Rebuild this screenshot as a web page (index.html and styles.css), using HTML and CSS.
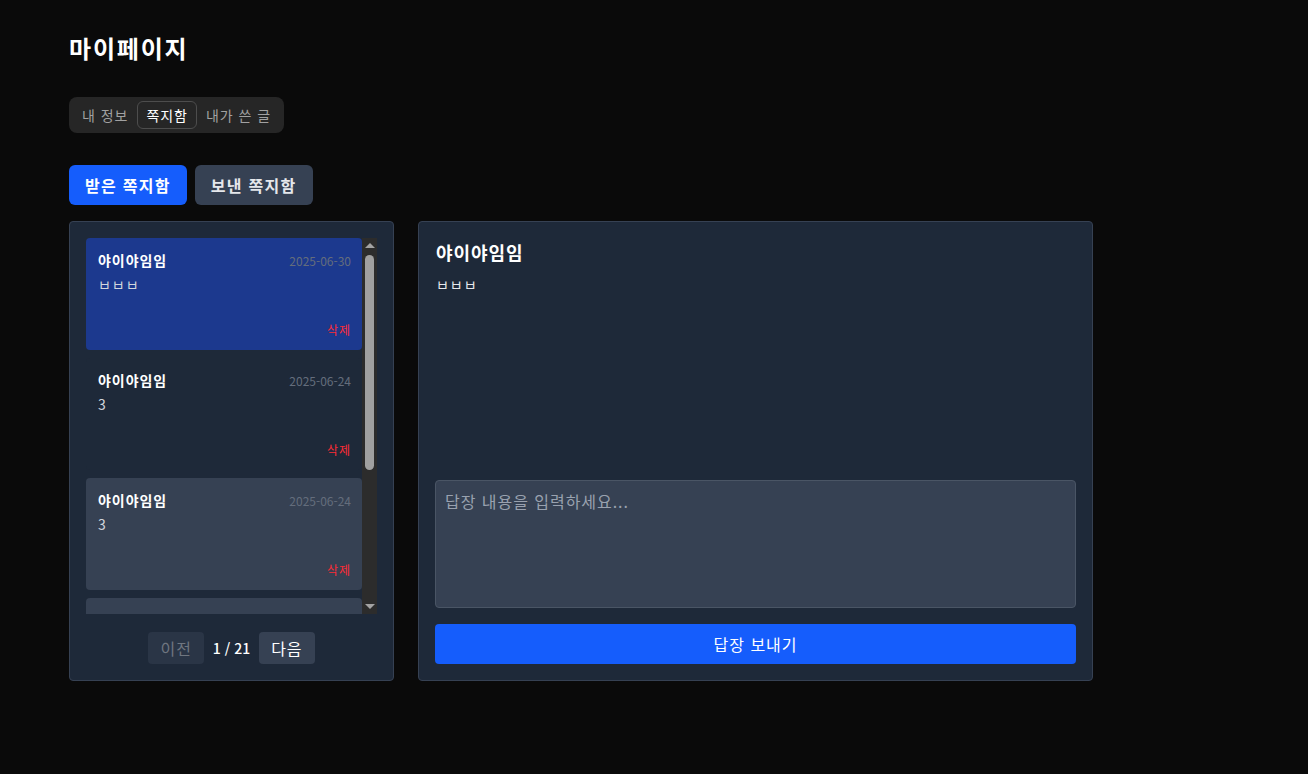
FILE: index.html
```html
<!DOCTYPE html>
<html lang="ko">

<head>
  <meta charset="UTF-8">
  <meta name="viewport" content="width=device-width, initial-scale=1.0">
  <title>마이페이지</title>
  <link rel="stylesheet" href="styles.css">
</head>

<body>
  <div class="page">
    <h1>마이페이지</h1>

    <div class="tabs">
      <button class="tab">내 정보</button>
      <button class="tab active">쪽지함</button>
      <button class="tab">내가 쓴 글</button>
    </div>

    <div class="box-switch">
      <button class="box-btn active">받은 쪽지함</button>
      <button class="box-btn">보낸 쪽지함</button>
    </div>

    <div class="inbox">
      <div class="list-panel">
        <div class="list-scroll">
          <div class="message-list">
            <div class="message-item selected">
              <div class="item-head">
                <span class="sender">야이야임임</span>
                <span class="date">2025-06-30</span>
              </div>
              <p class="preview">ㅂㅂㅂ</p>
              <button class="delete-btn">삭제</button>
            </div>
            <div class="message-item plain">
              <div class="item-head">
                <span class="sender">야이야임임</span>
                <span class="date">2025-06-24</span>
              </div>
              <p class="preview">3</p>
              <button class="delete-btn">삭제</button>
            </div>
            <div class="message-item">
              <div class="item-head">
                <span class="sender">야이야임임</span>
                <span class="date">2025-06-24</span>
              </div>
              <p class="preview">3</p>
              <button class="delete-btn">삭제</button>
            </div>
            <div class="message-item">
              <div class="item-head">
                <span class="sender">야이야임임</span>
                <span class="date">2025-06-24</span>
              </div>
              <p class="preview">2</p>
              <button class="delete-btn">삭제</button>
            </div>
          </div>

          <!-- scrollbar -->
          <div class="scrollbar">
            <span class="arrow up"></span>
            <div class="track"><span class="thumb"></span></div>
            <span class="arrow down"></span>
          </div>
        </div>

        <div class="pagination">
          <button class="page-btn" disabled>이전</button>
          <span class="page-info">1 / 21</span>
          <button class="page-btn">다음</button>
        </div>
      </div>

      <div class="detail-panel">
        <div class="detail-body">
          <h2>야이야임임</h2>
          <p class="detail-text">ㅂㅂㅂ</p>
        </div>
        <textarea class="reply-input" placeholder="답장 내용을 입력하세요..."></textarea>
        <button class="reply-btn">답장 보내기</button>
      </div>
    </div>
  </div>
</body>

</html>
```

FILE: styles.css
```css
* {
  box-sizing: border-box;
  margin: 0;
  padding: 0;
}

body {
  background: #0a0a0a;
  color: #fff;
  font-family: 'Noto Sans CJK KR', 'Noto Sans', sans-serif;
  letter-spacing: 0.06em;
}

button,
textarea {
  font-family: inherit;
  letter-spacing: inherit;
}

.page {
  width: 1093px;
  padding: 32px 0 0 69px;
}

h1 {
  font-size: 24px;
  line-height: 32px;
  font-weight: 700;
  letter-spacing: 0.075em;
  margin-bottom: 33px;
}

.tabs {
  display: inline-flex;
  padding: 4px;
  background: #262626;
  border-radius: 8px;
}

.tab {
  font-size: 14px;
  line-height: 20px;
  padding: 3px 8px;
  border: 1px solid transparent;
  border-radius: 6px;
  background: none;
  color: #a1a1a1;
}

.tab.active {
  color: #fff;
  border-color: #4d4d4d;
  background: #262626;
}

.box-switch {
  display: flex;
  gap: 8px;
  margin: 32px 0 16px;
}

.box-btn {
  height: 40px;
  padding: 0 16px;
  border: none;
  border-radius: 6px;
  font-size: 16px;
  font-weight: 700;
  letter-spacing: 0.08em;
  background: #364153;
  color: #e5e7eb;
}

.box-btn.active {
  background: #155dfc;
  color: #fff;
}

.inbox {
  display: flex;
  gap: 24px;
  height: 460px;
}

.list-panel {
  width: 325px;
  display: flex;
  flex-direction: column;
  padding: 16px;
  background: #1e2939;
  border: 1px solid #364153;
  border-radius: 4px;
}

.list-scroll {
  display: flex;
  height: 376px;
}

.message-list {
  flex: 1;
  overflow: hidden;
  display: flex;
  flex-direction: column;
  gap: 8px;
}

.scrollbar {
  width: 15px;
  display: flex;
  flex-direction: column;
  background: #2c2c2c;
}

.arrow {
  height: 15px;
  display: flex;
  justify-content: center;
  align-items: center;
}

.arrow::before {
  content: "";
  border-left: 5px solid transparent;
  border-right: 5px solid transparent;
}

.arrow.up::before {
  border-bottom: 5px solid #a3a3a3;
}

.arrow.down::before {
  border-top: 5px solid #a3a3a3;
}

.track {
  flex: 1;
  padding: 2px 3px 0;
}

.thumb {
  display: block;
  height: 215px;
  background: #a0a0a0;
  border-radius: 5px;
}

.message-item {
  flex: 0 0 112px;
  display: flex;
  flex-direction: column;
  padding: 12px 11px 12px 12px;
  background: #364153;
  border-radius: 4px;
}

.message-item.selected {
  background: #1c398e;
}

.message-item.plain {
  background: #1e2939;
}

.item-head {
  display: flex;
  justify-content: space-between;
  align-items: center;
  height: 20px;
}

.sender {
  font-size: 14px;
  font-weight: 700;
}

.date {
  font-size: 12px;
  letter-spacing: 0;
  color: #646d7c;
}

.preview {
  margin-top: 4px;
  font-size: 14px;
  line-height: 20px;
  color: #d1d5dc;
}

.delete-btn {
  margin-top: auto;
  align-self: flex-end;
  background: none;
  border: none;
  font-size: 12px;
  line-height: 16px;
  color: #fb2c36;
}

.pagination {
  display: flex;
  justify-content: center;
  align-items: center;
  gap: 9px;
  margin-top: 18px;
}

.page-btn {
  height: 32px;
  padding: 0 12px;
  border: none;
  border-radius: 4px;
  font-size: 16px;
  background: #364153;
  color: #fff;
}

.page-btn:disabled {
  background: #2a3546;
  color: #6f7680;
}

.page-info {
  font-size: 14px;
  font-weight: 500;
  letter-spacing: 0;
}

.detail-panel {
  flex: 1;
  display: flex;
  flex-direction: column;
  padding: 16px;
  background: #1e2939;
  border: 1px solid #364153;
  border-radius: 4px;
}

.detail-body {
  flex: 1;
  padding-left: 1px;
}

h2 {
  font-size: 18px;
  line-height: 28px;
  font-weight: 700;
}

.detail-text {
  margin-top: 8px;
  font-size: 14px;
  line-height: 20px;
  color: #e5e7eb;
}

.reply-input {
  height: 128px;
  resize: none;
  padding: 8px 9px;
  font-size: 16px;
  line-height: 24px;
  color: #fff;
  background: #364153;
  border: 1px solid #4a5565;
  border-radius: 4px;
  outline: none;
}

.reply-input::placeholder {
  color: #99a1af;
}

.reply-btn {
  margin-top: 16px;
  height: 40px;
  border: none;
  border-radius: 4px;
  font-size: 16px;
  background: #155dfc;
  color: #fff;
}
```
